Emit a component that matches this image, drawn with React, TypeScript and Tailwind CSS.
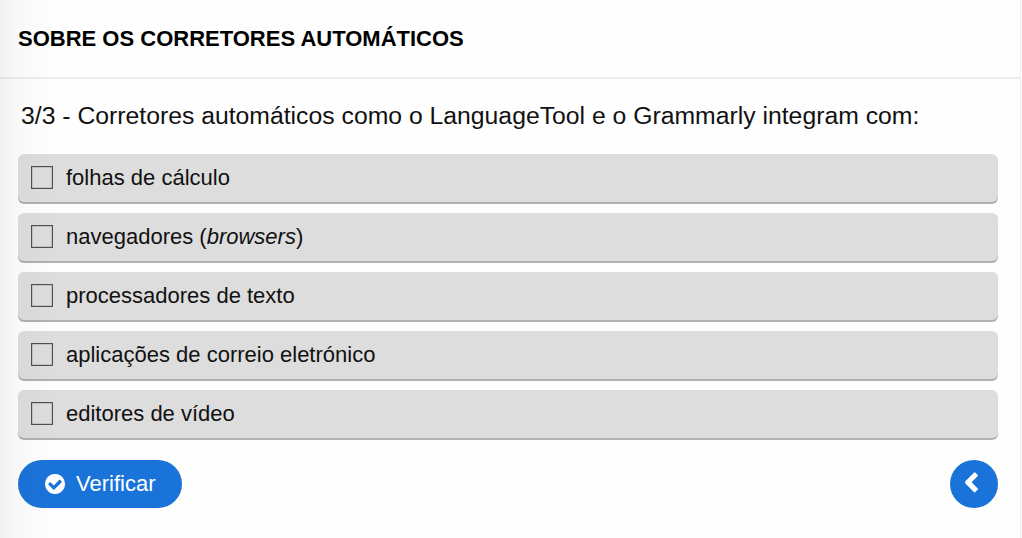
const options = [
  <>folhas de cálculo</>,
  <>navegadores (<em>browsers</em>)</>,
  <>processadores de texto</>,
  <>aplicações de correio eletrónico</>,
  <>editores de vídeo</>,
];

function Option({ children }: { children: React.ReactNode }) {
  return (
    <li className="flex h-12 items-center gap-[13px] rounded-[6px] bg-[#dddddd] pl-[13px] text-[22px] text-[#111111] shadow-[0_2px_0_#b0b0b0]">
      <span role="checkbox" aria-checked="false" className="mb-px h-[23px] w-[22px] shrink-0 border border-[#505050] shadow-[inset_0_0_0_0.5px_#50505060]" />
      <span className="pb-0.5">{children}</span>
    </li>
  );
}

export default function App() {
  return (
    <main className="relative h-[538px] w-[1021px] overflow-hidden border-r border-[#eeeeee] bg-[#fefefe] font-['Liberation_Sans',Arial,sans-serif] text-black">
      <header className="flex h-[79px] items-center border-b-2 border-[#ececec] pl-[18px]">
        <h1 className="text-[22px] font-bold">SOBRE OS CORRETORES AUTOMÁTICOS</h1>
      </header>
      <p className="pl-[21px] pt-[19px] text-[24.75px] leading-[36px] text-[#111111]">
        3/3 - Corretores automáticos como o LanguageTool e o Grammarly integram com:
      </p>
      <ul className="ml-[18px] mt-5 flex w-[980px] flex-col gap-[11px]">
        {options.map((option, i) => (
          <Option key={i}>{option}</Option>
        ))}
      </ul>
      <div className="ml-[18px] mt-[22px] flex w-[980px] justify-between">
        <button className="flex h-12 w-[164px] items-center gap-[11px] rounded-full bg-[#1a73d9] pl-[27px] text-[22px] text-white">
          <svg viewBox="0 0 1536 1536" className="mb-px h-5 w-5 shrink-0" fill="currentColor">
            <path d="M1284 606q0-28-18-46l-91-90q-19-19-45-19t-45 19L677 877 451 651q-19-19-45-19t-45 19l-91 90q-18 18-18 46 0 27 18 45l362 362q19 19 45 19 27 0 46-19l543-543q18-18 18-45zM1536 768q0 209-103 385.500T1153.500 1433 768 1536t-385.500-103T103 1153.500 0 768t103-385.500T382.500 103 768 0t385.500 103T1433 382.500 1536 768z" />
          </svg>
          <span className="pb-0.5">Verificar</span>
        </button>
        <button aria-label="Anterior" className="flex h-12 w-12 items-center justify-center rounded-full bg-[#1a73d9] text-white">
          <svg viewBox="0 0 48 48" className="h-12 w-12" fill="currentColor" stroke="currentColor" strokeWidth="1.4" strokeLinejoin="round">
            <path d="M24.6 12.9 L27.3 15.6 L20.6 22.3 L27.3 29 L24.6 31.700 L15.900 22.9 V21.700 Z" />
          </svg>
        </button>
      </div>
      <div className="pointer-events-none absolute inset-y-0 left-0 w-14 bg-linear-to-r from-black/5 via-black/2 via-35% to-transparent" />
    </main>
  );
}
